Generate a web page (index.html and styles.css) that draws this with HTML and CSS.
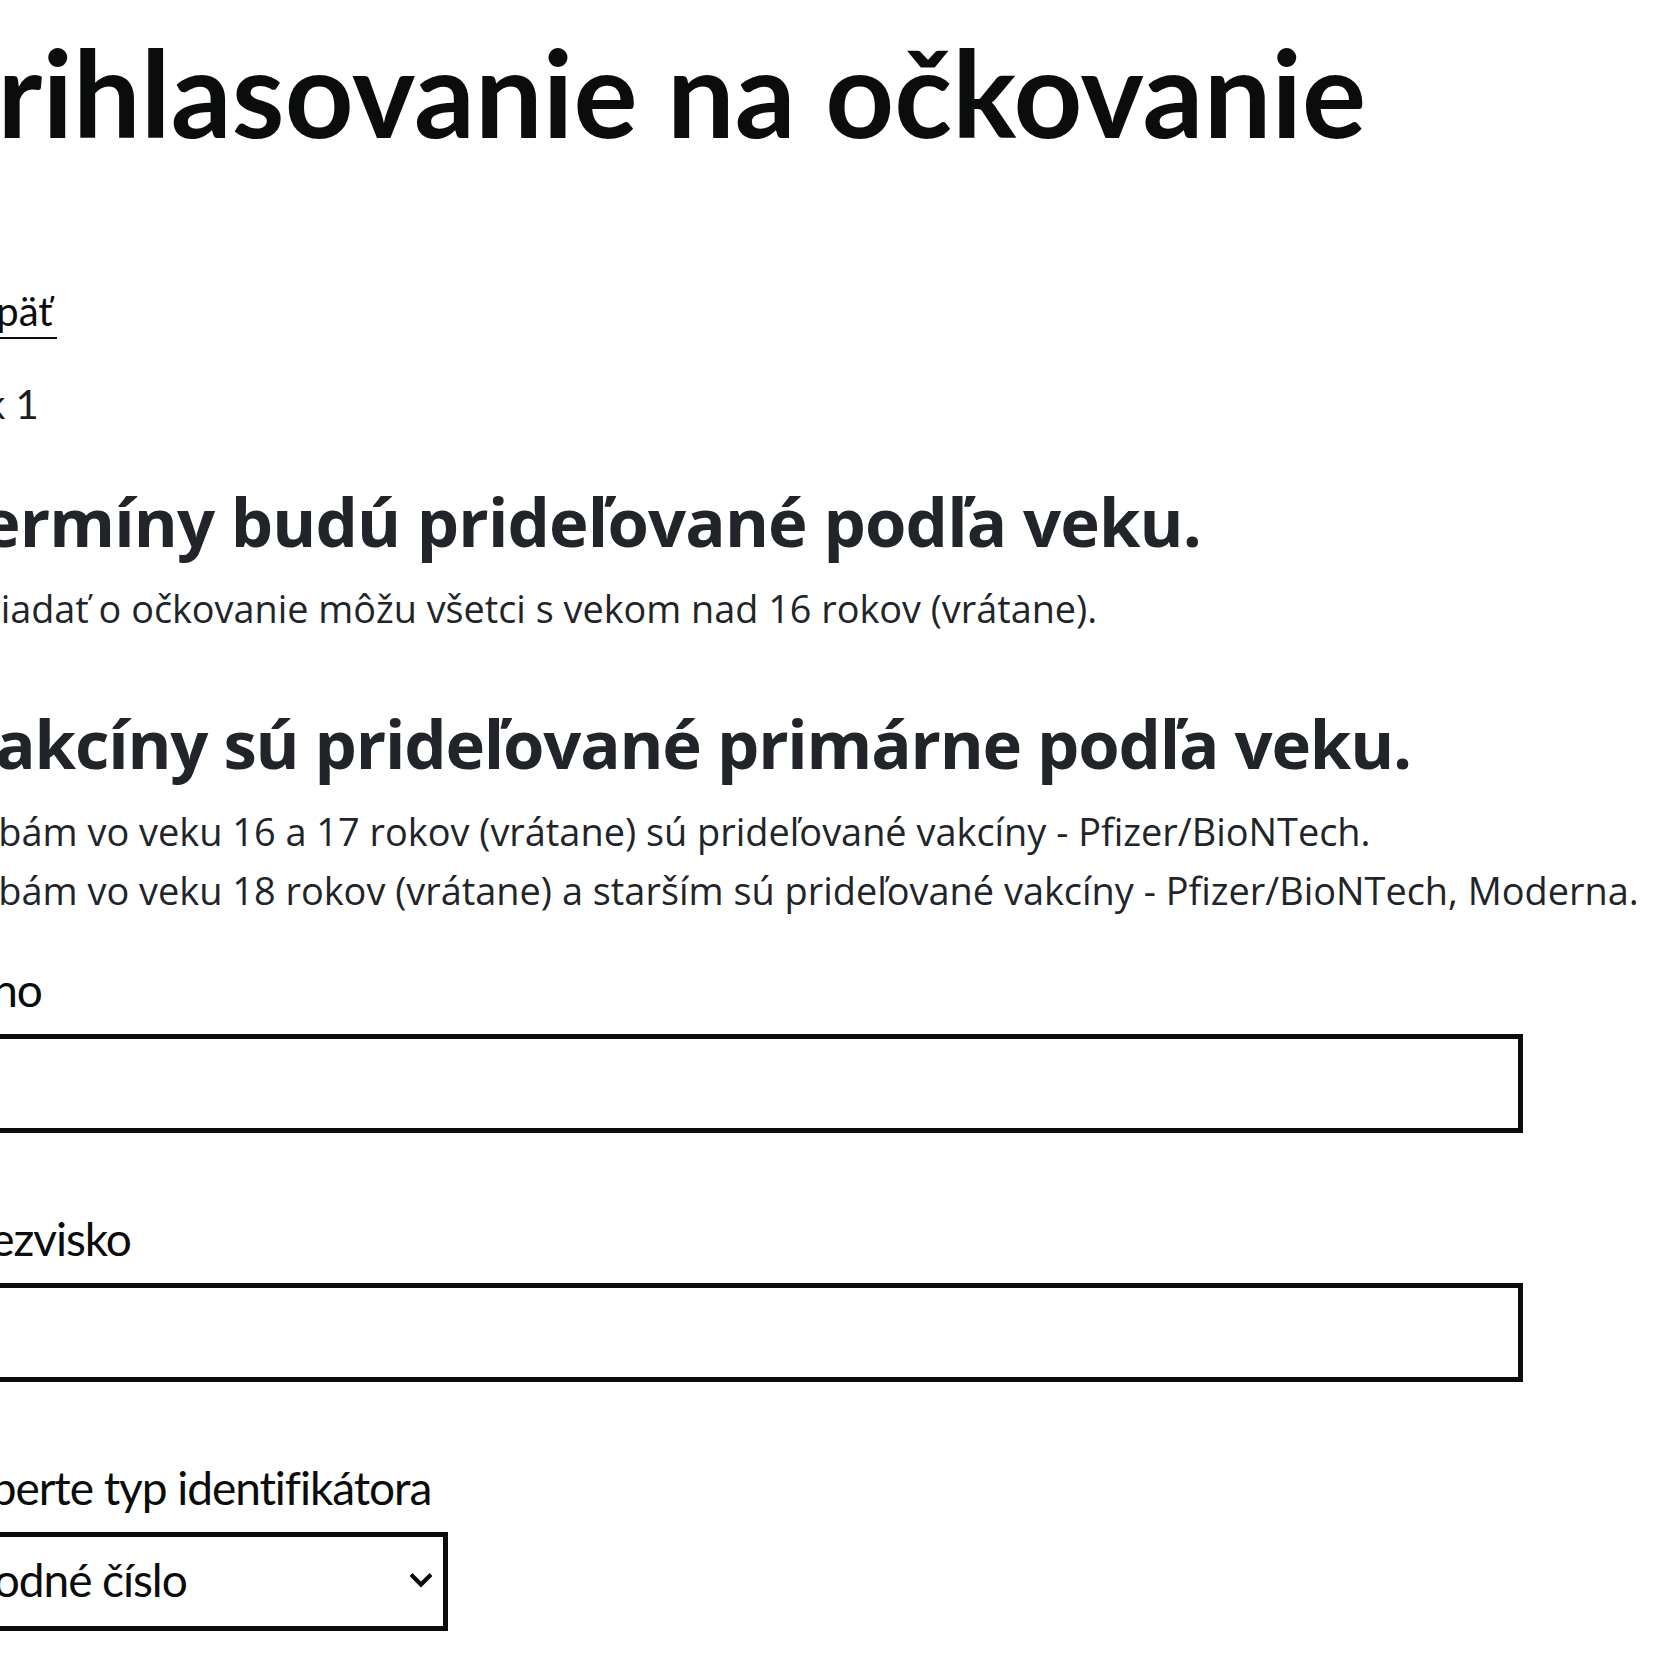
FILE: index.html
```html
<!DOCTYPE html>
<html lang="sk">
<head>
<meta charset="utf-8">
<title>Prihlasovanie na očkovanie</title>
<link rel="stylesheet" href="styles.css">
</head>
<body>
<main class="page">
  <h1 class="title">Prihlasovanie na očkovanie</h1>
  <a class="back-link" href="#">Späť</a>
  <p class="step">Krok 1</p>
  <h2 class="notice-title notice-title--first">Termíny budú prideľované podľa veku.</h2>
  <p class="notice-text">Žiadať o očkovanie môžu všetci s vekom nad 16 rokov (vrátane).</p>
  <h2 class="notice-title notice-title--second">Vakcíny sú prideľované primárne podľa veku.</h2>
  <ul class="notice-list">
    <li>Osobám vo veku 16 a 17 rokov (vrátane) sú prideľované vakcíny - Pfizer/BioNTech.</li>
    <li>Osobám vo veku 18 rokov (vrátane) a starším sú prideľované vakcíny - Pfizer/BioNTech, Moderna.</li>
  </ul>
  <form class="form">
    <div class="field field--first">
      <label class="label label--name" for="meno">Meno</label>
      <input class="input" id="meno" type="text">
    </div>
    <div class="field">
      <label class="label label--surname" for="priezvisko">Priezvisko</label>
      <input class="input" id="priezvisko" type="text">
    </div>
    <div class="field">
      <label class="label label--id" for="typ">Vyberte typ identifikátora</label>
      <div class="select-wrap">
        <select class="select" id="typ">
          <option>Rodné číslo</option>
        </select>
        <svg class="select-arrow" width="22" height="15" viewBox="0 0 22 15" aria-hidden="true">
          <path d="M2.5 3 L11 11.5 L19.5 3" fill="none" stroke="#0b0c0c" stroke-width="4.2" stroke-linecap="square" stroke-linejoin="miter"/>
        </svg>
      </div>
    </div>
  </form>
</main>
</body>
</html>
```

FILE: styles.css
```css
html, body {
  margin: 0;
  padding: 0;
  background: #ffffff;
  overflow: hidden;
}

body {
  color: #0b0c0c;
  font-family: "Lato", "Liberation Sans", sans-serif;
}

.page {
  margin-left: -60px;
  padding-top: 27px;
}

.title {
  margin: 0 0 0 -16px;
  font-family: "Lato", "Liberation Sans", sans-serif;
  font-weight: 700;
  font-size: 120px;
  line-height: 130px;
  letter-spacing: 0.15px;
  color: #0b0c0c;
  white-space: nowrap;
}

.back-link {
  display: block;
  width: fit-content;
  margin-top: 128px;
  padding-left: 35px;
  padding-right: 4px;
  font-size: 40px;
  line-height: 52px;
  color: #0b0c0c;
  text-decoration: none;
  border-bottom: 2.5px solid #0b0c0c;
}

.step {
  margin: 40px 0 0 -18px;
  font-size: 40px;
  line-height: 50px;
  color: #1d1d1d;
}

.notice-title {
  margin: 0;
  font-family: "Open Sans", "Noto Sans", sans-serif;
  font-weight: 700;
  font-size: 67px;
  line-height: 90px;
  color: #212529;
  white-space: nowrap;
}

.notice-title--first {
  margin-top: 46.5px;
  margin-left: 3px;
  letter-spacing: -0.85px;
}

.notice-title--second {
  margin-top: 60.5px;
  margin-left: 13px;
  letter-spacing: -1.2px;
}

.notice-text {
  margin: 15.5px 0 0 39px;
  font-family: "Open Sans", "Noto Sans", sans-serif;
  font-size: 37.8px;
  line-height: 56px;
  color: #212529;
  white-space: nowrap;
}

.notice-list {
  margin: 14px 0 0 -12px;
  padding: 0;
  list-style: none;
  font-family: "Open Sans", "Noto Sans", sans-serif;
  font-size: 37.9px;
  line-height: 59px;
  color: #212529;
  white-space: nowrap;
}

.form {
  margin: 0;
}

.field {
  display: flex;
  flex-direction: column;
  align-items: flex-start;
  gap: 14px;
  margin-top: 76px;
}

.field--first {
  margin-top: 40px;
}

.label {
  display: block;
  font-size: 46px;
  line-height: 60px;
  letter-spacing: -1.05px;
  color: #0b0c0c;
  white-space: nowrap;
}

.label--name {
  margin-left: -12px;
}

.label--surname {
  margin-left: -1.5px;
}

.label--id {
  margin-left: -1px;
}

.input {
  box-sizing: border-box;
  width: 1583px;
  height: 99px;
  margin: 0;
  padding: 0 12px;
  border: 5px solid #0b0c0c;
  border-radius: 0;
  background: #ffffff;
  font-family: "Lato", "Liberation Sans", sans-serif;
  font-size: 46px;
  outline: none;
}

.select-wrap {
  position: relative;
  margin-left: 10.5px;
}

.select {
  box-sizing: border-box;
  display: block;
  width: 497.5px;
  height: 99px;
  margin: 0;
  padding: 0 12px 4px;
  border: 5px solid #0b0c0c;
  border-radius: 0;
  background: #ffffff;
  color: #0b0c0c;
  font-family: "Lato", "Liberation Sans", sans-serif;
  font-size: 46px;
  letter-spacing: -1.05px;
  -webkit-appearance: none;
  appearance: none;
  outline: none;
}

.select-arrow {
  position: absolute;
  right: 16px;
  top: 41px;
  pointer-events: none;
}
```
